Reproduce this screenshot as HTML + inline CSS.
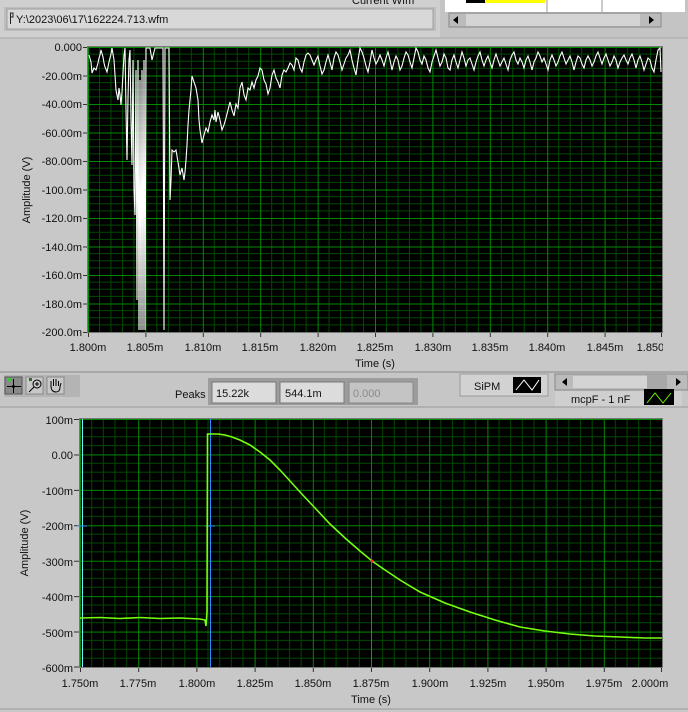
<!DOCTYPE html>
<html><head><meta charset="utf-8"><style>
body{margin:0;width:688px;height:712px;overflow:hidden;background:#c8c8c8;font-family:"Liberation Sans",sans-serif;}
svg{position:absolute;left:0;top:0}
text{font-family:"Liberation Sans",sans-serif;font-size:11px;fill:#111}
</style></head><body>
<svg width="688" height="712" viewBox="0 0 688 712">
<defs>
<pattern id="g1" x="88" y="47" width="57.4" height="28.5" patternUnits="userSpaceOnUse">
<path d="M11.48 0V28.5M22.96 0V28.5M34.44 0V28.5M45.92 0V28.5M0 7.125H57.4M0 14.25H57.4M0 21.375H57.4" stroke="#004a00" stroke-width="1"/>
<path d="M0.5 0V28.5M0 0.5H57.4" stroke="#008a00" stroke-width="1"/>
</pattern>
<pattern id="g2" x="80" y="419" width="58.2" height="35.43" patternUnits="userSpaceOnUse">
<path d="M11.64 0V35.43M23.28 0V35.43M34.92 0V35.43M46.56 0V35.43M0 8.86H58.2M0 17.71H58.2M0 26.57H58.2" stroke="#004a00" stroke-width="1"/>
<path d="M0.5 0V35.43M0 0.5H58.2" stroke="#008a00" stroke-width="1"/>
</pattern>
</defs>
<rect x="0" y="0" width="688" height="38" fill="#cfcfcf"/>
<text x="352" y="4" font-size="11">Current Wfm</text>
<rect x="4" y="7" width="432" height="24" fill="#bdbdbd"/>
<rect x="7" y="9" width="426" height="20" fill="#d8d8d8" stroke="#a0a0a0"/>
<path d="M10.5 13v11M10 13h3v4h-3" fill="none" stroke="#222"/>
<text x="16" y="23" font-size="11">Y:\2023\06\17\162224.713.wfm</text>
<rect x="440" y="0" width="248" height="38" fill="#c4c4c4"/>
<rect x="445" y="0" width="240" height="12" fill="#fff"/>
<rect x="466" y="0" width="20" height="3" fill="#000"/><rect x="485" y="0" width="60" height="3" fill="#ff0"/>
<line x1="547" y1="0" x2="547" y2="12" stroke="#999"/><line x1="602" y1="0" x2="602" y2="12" stroke="#999"/>
<rect x="449" y="13" width="212" height="14" fill="#bbb" stroke="#888"/>
<rect x="466" y="14" width="174" height="12" fill="#d4d4d4"/>
<polygon points="453,20 458,16 458,24" fill="#000"/><polygon points="654,20 649,16 649,24" fill="#000"/>
<line x1="0" y1="38" x2="688" y2="38" stroke="#a8a8a8"/>
<rect x="0" y="40" width="688" height="330" fill="#c8c8c8"/>
<rect x="88" y="47" width="574" height="285" fill="#000"/>
<rect x="88" y="47" width="574" height="285" fill="url(#g1)"/>
<rect x="87.5" y="46.5" width="575" height="286" fill="none" stroke="#777"/>
<g text-anchor="end">
<text x="82" y="51">0.000</text><text x="82" y="80">-20.00m</text><text x="82" y="108">-40.00m</text><text x="82" y="137">-60.00m</text><text x="82" y="165">-80.00m</text><text x="82" y="194">-100.0m</text><text x="82" y="222">-120.0m</text><text x="82" y="251">-140.0m</text><text x="82" y="279">-160.0m</text><text x="82" y="308">-180.0m</text><text x="82" y="336">-200.0m</text>
</g>
<g stroke="#333"><path d="M83 47.5h4M83 76h4M83 104.5h4M83 133h4M83 161.5h4M83 190h4M83 218.5h4M83 247h4M83 275.5h4M83 304h4M83 332.5h4"/>
<path d="M88.5 333v4M145.9 333v4M203.3 333v4M260.7 333v4M318.1 333v4M375.5 333v4M432.9 333v4M490.3 333v4M547.7 333v4M605.1 333v4M661.5 333v4"/></g>
<g text-anchor="middle">
<text x="88" y="351">1.800m</text><text x="145" y="351">1.805m</text><text x="203" y="351">1.810m</text><text x="260" y="351">1.815m</text><text x="318" y="351">1.820m</text><text x="375" y="351">1.825m</text><text x="433" y="351">1.830m</text><text x="490" y="351">1.835m</text><text x="547" y="351">1.840m</text><text x="605" y="351">1.845m</text><text x="655" y="351">1.850m</text>
<text x="375" y="367">Time (s)</text>
<text transform="translate(30 190) rotate(-90)">Amplitude (V)</text>
</g>
<polyline fill="none" stroke="#fff" stroke-width="1.1" points="89,55 91,62 92,73 94,68 96,70 98,63 99,58 100,55 101,50 103,57 104,63 105,67 107,72 109,62 111,54 112,48 114,60 115,75 116,90 118,100 119,88 120,95 121,105 122,92 124,55 125,48 126,110 127,160 128,98 129,60 130,50 131,120 132,165 133,60 134,190 135,215 136,70 137,300 138,60 139,330 140,80 141,330 142,70 143,330 144,60 145,330 146,48 150,48 152,60 155,48 163,48 164,330 165,48 169,48 170,200 171,180 172,150 174,152 176,150 178,162 180,175 182,168 184,180 185,172 186,160 187,145 188,125 189,110 191,90 192,76 194,82 196,88 198,100 199,120 200,130 202,143 204,135 206,128 208,132 210,122 212,115 214,120 215,110 216,122 218,112 220,120 222,130 224,125 226,118 228,110 230,102 232,110 234,116 236,104 238,108 240,88 242,82 244,95 246,100 248,88 250,90 252,82 254,88 256,80 258,76 260,68 262,70 264,80 266,84 268,94 270,88 272,75 274,70 276,78 278,82 280,88 282,75 284,70 286,72 288,68 290,63 292,65 294,70 296,58 298,60 300,68 302,72 304,62 306,55 308,53 310,55 312,60 314,65 316,60 318,56 320,66 322,74 324,70 326,62 328,55 330,62 332,70 334,58 336,52 338,55 340,62 342,70 344,64 346,58 348,55 350,50 352,60 354,68 356,75 358,60 360,48 362,52 364,58 366,66 368,72 370,62 372,50 374,58 376,64 378,60 380,55 382,60 384,66 386,58 388,52 390,60 392,70 394,62 396,56 398,60 400,70 402,66 404,58 406,52 408,55 410,62 412,68 414,58 416,48 418,52 420,60 422,64 424,56 426,60 428,68 430,72 432,62 434,56 436,50 438,58 440,66 442,62 444,54 446,58 448,68 450,70 452,60 454,55 456,62 458,68 460,60 462,52 464,58 466,66 468,60 470,58 472,64 474,70 476,62 478,56 480,52 482,60 484,66 486,60 488,56 490,62 492,68 494,60 496,54 498,60 500,66 502,62 504,58 506,64 508,70 510,60 512,55 514,52 516,60 518,64 520,58 522,62 524,68 526,60 528,56 530,62 532,70 534,62 536,58 538,52 540,56 542,62 544,58 546,64 548,70 550,60 552,55 554,60 556,66 558,62 560,56 562,52 564,58 566,64 568,60 570,56 572,62 574,70 576,62 578,56 580,58 582,64 584,68 586,60 588,56 590,60 592,66 594,62 596,56 598,52 600,58 602,64 604,58 606,54 608,60 610,66 612,62 614,56 616,60 618,68 620,62 622,58 624,55 626,60 628,64 630,58 632,54 634,60 636,68 638,60 640,56 642,62 644,70 646,64 648,58 650,60 652,68 654,72 656,60 658,50 660,48 661,72"/>
<rect x="663" y="40" width="25" height="330" fill="#c8c8c8"/>
<line x1="0" y1="372" x2="688" y2="372" stroke="#888"/>
<rect x="0" y="373" width="688" height="33" fill="#c6c6c6"/>
<rect x="4" y="375" width="76" height="22" fill="#b4b4b4"/>
<rect x="5" y="377" width="17" height="17" fill="#8a8a8a" stroke="#555"/>
<path d="M13.5 379v14M7 386.5h14" stroke="#000"/><circle cx="13.5" cy="386.5" r="1.5" fill="#000"/><rect x="8" y="378" width="3" height="3" fill="#3c3"/>
<rect x="26" y="377" width="17" height="17" fill="#c8c8c8" stroke="#888"/>
<circle cx="37" cy="384" r="4" fill="none" stroke="#000"/><path d="M34 387l-5 5M35 384h4M37 382v4" stroke="#000"/><rect x="29" y="378" width="3" height="3" fill="#363"/>
<rect x="47" y="377" width="17" height="17" fill="#c8c8c8" stroke="#888"/>
<path d="M51 386v-5M53.5 386v-7M56 386v-7M58.5 386v-5M51 386c0 4 2 6 5 6s4-2 4-5l1-4" fill="none" stroke="#000"/>
<text x="175" y="398" font-size="12">Peaks</text>
<rect x="208" y="378" width="210" height="27" fill="#9c9c9c"/>
<rect x="212" y="382" width="64" height="21" fill="#dcdcdc" stroke="#777"/>
<rect x="280" y="382" width="64" height="21" fill="#dcdcdc" stroke="#777"/>
<rect x="349" y="382" width="64" height="21" fill="#c4c4c4" stroke="#888"/>
<text x="216" y="397">15.22k</text><text x="285" y="397">544.1m</text><text x="353" y="397" style="fill:#8a8a8a">0.000</text>
<rect x="460" y="374" width="88" height="22" fill="#d2d2d2" stroke="#999"/>
<text x="474" y="390" font-size="12">SiPM</text>
<rect x="513" y="377" width="28" height="16" fill="#000"/>
<polyline points="516,390 524,380 532,390 539,380" fill="none" stroke="#fff"/>
<rect x="555" y="374" width="133" height="16" fill="#bbb" stroke="#888"/>
<rect x="573" y="376" width="94" height="12" fill="#d4d4d4"/>
<rect x="647" y="375" width="20" height="14" fill="#a8a8a8"/>
<polygon points="562,382 567,378 567,386" fill="#000"/><polygon points="681,382 676,378 676,386" fill="#000"/>
<rect x="555" y="391" width="127" height="16" fill="#cfcfcf"/>
<text x="571" y="403" font-size="12">mcpF - 1 nF</text>
<rect x="644" y="389" width="30" height="16" fill="#000"/>
<polyline points="647,403 655,393 663,403 671,393" fill="none" stroke="#6f0"/>
<line x1="0" y1="407" x2="688" y2="407" stroke="#999"/>
<rect x="0" y="408" width="688" height="304" fill="#c8c8c8"/>
<rect x="80" y="419" width="582" height="248" fill="#000"/>
<rect x="80" y="419" width="582" height="248" fill="url(#g2)"/>
<rect x="79.5" y="418.5" width="583" height="249" fill="none" stroke="#777"/>
<g text-anchor="end">
<text x="73" y="424">100m</text><text x="73" y="459">0.00</text><text x="73" y="495">-100m</text><text x="73" y="530">-200m</text><text x="73" y="566">-300m</text><text x="73" y="601">-400m</text><text x="73" y="637">-500m</text><text x="73" y="672">-600m</text>
</g>
<g stroke="#333"><path d="M74 419.5h5M74 455h5M74 490.4h5M74 525.8h5M74 561.2h5M74 596.6h5M74 632h5M74 667h5"/>
<path d="M80.5 668v4M138.7 668v4M196.9 668v4M255.1 668v4M313.3 668v4M371.5 668v4M429.7 668v4M487.9 668v4M546.1 668v4M604.3 668v4M661.5 668v4"/></g>
<g text-anchor="middle">
<text x="80" y="687">1.750m</text><text x="138" y="687">1.775m</text><text x="197" y="687">1.800m</text><text x="255" y="687">1.825m</text><text x="313" y="687">1.850m</text><text x="371" y="687">1.875m</text><text x="430" y="687">1.900m</text><text x="488" y="687">1.925m</text><text x="546" y="687">1.950m</text><text x="604" y="687">1.975m</text><text x="650" y="687">2.000m</text>
<text x="371" y="703">Time (s)</text>
<text transform="translate(28 543) rotate(-90)">Amplitude (V)</text>
</g>
<line x1="82.5" y1="419" x2="82.5" y2="667" stroke="#7ef"/>
<line x1="210.5" y1="419" x2="210.5" y2="667" stroke="#38f"/>
<line x1="371.5" y1="560" x2="371.5" y2="667" stroke="#f22"/>
<path d="M77 526h10M205 526h10" stroke="#38f"/>
<polyline fill="none" stroke="#7f1" stroke-width="1.6" points="80,618 100,617.5 120,618.5 140,617.5 160,618.5 180,618 200,619 205,620 206,626 207,612 207.5,434 212,434 218,434 225,435 232,437 240,440 250,445 260,452 270,460 280,470 290,481 300,492 315,508 330,524 345,538 360,551 372,561 385,570 400,580 420,592 445,603 470,612 495,620 520,627 545,631 570,634 595,636 620,637 645,638 662,638"/>
<circle cx="372" cy="561" r="1.5" fill="#f33"/>
<rect x="663" y="408" width="25" height="270" fill="#c8c8c8"/>
<line x1="0" y1="709" x2="688" y2="709" stroke="#999"/>
</svg>
</body></html>
